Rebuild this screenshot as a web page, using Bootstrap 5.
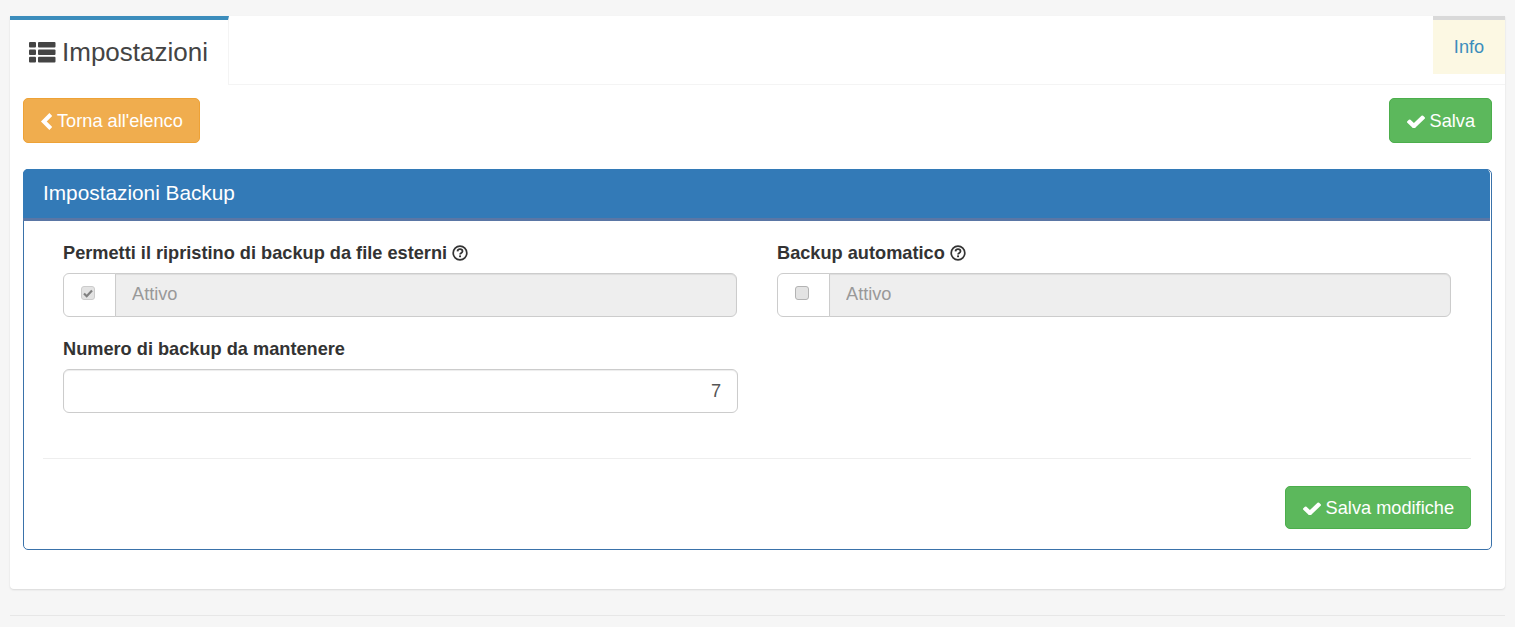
<!DOCTYPE html>
<html lang="it">
<head>
<meta charset="utf-8">
<title>Impostazioni</title>
<link href="https://cdn.jsdelivr.net/npm/bootstrap@5.3.0/dist/css/bootstrap.min.css" rel="stylesheet">
<style>
html,body{height:100%;}
body{background:#f6f6f6;font-family:"Liberation Sans",Arial,sans-serif;font-size:18.2px;color:#333;padding:16px 10px 0;overflow:hidden;}
.sheet{background:#fff;height:573px;border-radius:0 0 4px 4px;box-shadow:0 1px 2px rgba(0,0,0,.12);}
.tabbar{height:69px;border-bottom:1px solid #f4f4f4;}
.tab-main{width:219px;height:69px;border-top:4px solid #3c8dbc;border-right:1px solid #f4f4f4;padding-left:19px;color:#444;font-size:26px;gap:6px;background:#fff;}
.tab-info{width:72px;height:58px;border-top:4px solid #d9d9d9;background:#fcf8e3;color:#3c8dbc;font-size:18.2px;text-decoration:none;padding-top:2px;}
.sheet-body{padding:13px 13px 0;}
.act{height:45px;font-size:18.2px;line-height:1;padding:1px 16px 0;border-radius:5px;gap:5px;color:#fff;}
.act-warn{background:#f0ad4e;border-color:#eea236;}
.act-warn:hover{background:#f0ad4e;border-color:#eea236;color:#fff;}
.act-ok{background:#5cb85c;border-color:#4cae4c;padding-left:17px;padding-right:16px;gap:5px;}
.act-ok:hover{background:#5cb85c;border-color:#4cae4c;color:#fff;}
.box{margin-top:26px;height:381px;border:1px solid #3a72aa;border-radius:5px;--bs-card-bg:#fff;}
.box-head{height:52px;margin:-1px 1px 0 -1px;background:#337ab7;color:#fff;font-size:20.8px;padding:0 20px 1px;border-bottom:3px solid #5a76a5;border-radius:5px 5px 0 0;}
.box-body{padding:20px 20px 0 19px;}
.fields{margin:0;padding:0 20px;column-gap:40px;}
.field{width:674px;padding:0;margin-bottom:20px;}
.field-wide{width:675px;}
.lbl{font-weight:700;font-size:18.2px;line-height:24px;margin:0;height:32px;color:#333;gap:5px;}
.grp{height:44px;}
.grp .input-group-text{width:53px;justify-content:center;background:#fff;border-color:#ccc;border-radius:6px 0 0 6px;padding:0;}
.grp .form-control{height:44px;font-size:18.2px;padding:0 16px 2px;background:#eee;color:#999;border-color:#ccc;border-radius:0 6px 6px 0;box-shadow:inset 0 1px 1px rgba(0,0,0,.075);}
.grp .form-control::placeholder{color:#999;}
.tick{appearance:none;width:14px;height:14px;margin:0 4px 5px 0;border:1px solid #b3b3b3;border-radius:3px;background:#e3e3e3;display:block;}
.tick:checked{background:#e3e3e3 url("data:image/svg+xml,%3Csvg xmlns='http://www.w3.org/2000/svg' viewBox='0 0 14 14'%3E%3Cpath d='M3 7.500l2.700 2.700L11 4.500' fill='none' stroke='%23808080' stroke-width='2.200'/%3E%3C/svg%3E") center/14px no-repeat;border-color:#ccc;}
.num{height:44px;font-size:18.2px;text-align:right;color:#555;border-color:#ccc;border-radius:6px;padding:0 16px;box-shadow:inset 0 1px 1px rgba(0,0,0,.075);}
.sep{margin:25px 0 0;border:0;border-top:1px solid #eee;opacity:1;}
.foot{padding-top:27px;}
.foot .act{height:43px;}
.rule{margin:26px 0 0;border:0;border-top:1px solid #e7e7e7;opacity:1;}
.help{margin-top:4px;flex:none;}
</style>
</head>
<body>
<div class="sheet">
  <div class="tabbar d-flex justify-content-between align-items-start">
    <div class="tab-main d-flex align-items-center">
      <svg width="27" height="21" viewBox="0 0 27 21" fill="#444" aria-hidden="true"><rect x="0" y="0" width="7" height="5.6" rx="1"/><rect x="9" y="0" width="17.5" height="5.6" rx="1"/><rect x="0" y="7.4" width="7" height="5.6" rx="1"/><rect x="9" y="7.4" width="17.5" height="5.6" rx="1"/><rect x="0" y="14.8" width="7" height="5.6" rx="1"/><rect x="9" y="14.8" width="17.5" height="5.6" rx="1"/></svg>
      <span>Impostazioni</span>
    </div>
    <a href="#" class="tab-info d-flex align-items-center justify-content-center">Info</a>
  </div>
  <div class="sheet-body">
    <div class="d-flex justify-content-between">
      <a href="#" class="btn act act-warn d-inline-flex align-items-center">
        <svg width="12" height="17" viewBox="0 0 12 17" aria-hidden="true"><path d="M10.800 1.500L3.800 8.500l7 7" fill="none" stroke="#fff" stroke-width="4"/></svg>
        <span>Torna all'elenco</span>
      </a>
      <a href="#" class="btn act act-ok d-inline-flex align-items-center">
        <svg width="18" height="13" viewBox="120 300 1552 1160" preserveAspectRatio="none" aria-hidden="true"><path fill="#fff" d="M1671 566q0 40-28 68l-724 724-136 136q-28 28-68 28t-68-28l-136-136-362-362q-28-28-28-68t28-68l136-136q28-28 68-28t68 28l294 295 656-657q28-28 68-28t68 28l136 136q28 28 28 68z"/></svg>
        <span>Salva</span>
      </a>
    </div>
    <div class="card box">
      <div class="box-head d-flex align-items-center">Impostazioni Backup</div>
      <div class="box-body">
        <div class="row fields">
          <div class="field">
            <label class="lbl d-flex align-items-start">Permetti il ripristino di backup da file esterni
              <svg class="help" width="16" height="16" viewBox="0 0 16 16" aria-hidden="true"><circle cx="8" cy="8" r="6.800" fill="none" stroke="#333" stroke-width="1.700"/><path d="M5.500 6.300c.2-1.400 1.300-2.100 2.500-2.100 1.400 0 2.500.8 2.500 2 0 1.800-2.400 1.600-2.400 3.300" fill="none" stroke="#333" stroke-width="1.800"/><rect x="7.100" y="10.400" width="1.900" height="1.800" fill="#333"/></svg>
            </label>
            <div class="input-group grp">
              <span class="input-group-text"><input class="tick" type="checkbox" checked disabled aria-label="Attivo"></span>
              <input class="form-control" type="text" placeholder="Attivo" disabled>
            </div>
          </div>
          <div class="field">
            <label class="lbl d-flex align-items-start">Backup automatico
              <svg class="help" width="16" height="16" viewBox="0 0 16 16" aria-hidden="true"><circle cx="8" cy="8" r="6.800" fill="none" stroke="#333" stroke-width="1.700"/><path d="M5.500 6.300c.2-1.400 1.300-2.100 2.500-2.100 1.400 0 2.500.8 2.500 2 0 1.800-2.400 1.600-2.400 3.300" fill="none" stroke="#333" stroke-width="1.800"/><rect x="7.100" y="10.400" width="1.900" height="1.800" fill="#333"/></svg>
            </label>
            <div class="input-group grp">
              <span class="input-group-text"><input class="tick" type="checkbox" aria-label="Attivo"></span>
              <input class="form-control" type="text" placeholder="Attivo" disabled>
            </div>
          </div>
          <div class="field field-wide">
            <label class="lbl d-flex align-items-start">Numero di backup da mantenere</label>
            <input class="form-control num" type="text" value="7">
          </div>
        </div>
        <hr class="sep">
        <div class="foot d-flex justify-content-end">
          <a href="#" class="btn act act-ok d-inline-flex align-items-center">
            <svg width="18" height="13" viewBox="120 300 1552 1160" preserveAspectRatio="none" aria-hidden="true"><path fill="#fff" d="M1671 566q0 40-28 68l-724 724-136 136q-28 28-68 28t-68-28l-136-136-362-362q-28-28-28-68t28-68l136-136q28-28 68-28t68 28l294 295 656-657q28-28 68-28t68 28l136 136q28 28 28 68z"/></svg>
            <span>Salva modifiche</span>
          </a>
        </div>
      </div>
    </div>
  </div>
</div>
<hr class="rule">
<script src="https://cdn.jsdelivr.net/npm/bootstrap@5.3.0/dist/js/bootstrap.bundle.min.js"></script>
</body>
</html>
